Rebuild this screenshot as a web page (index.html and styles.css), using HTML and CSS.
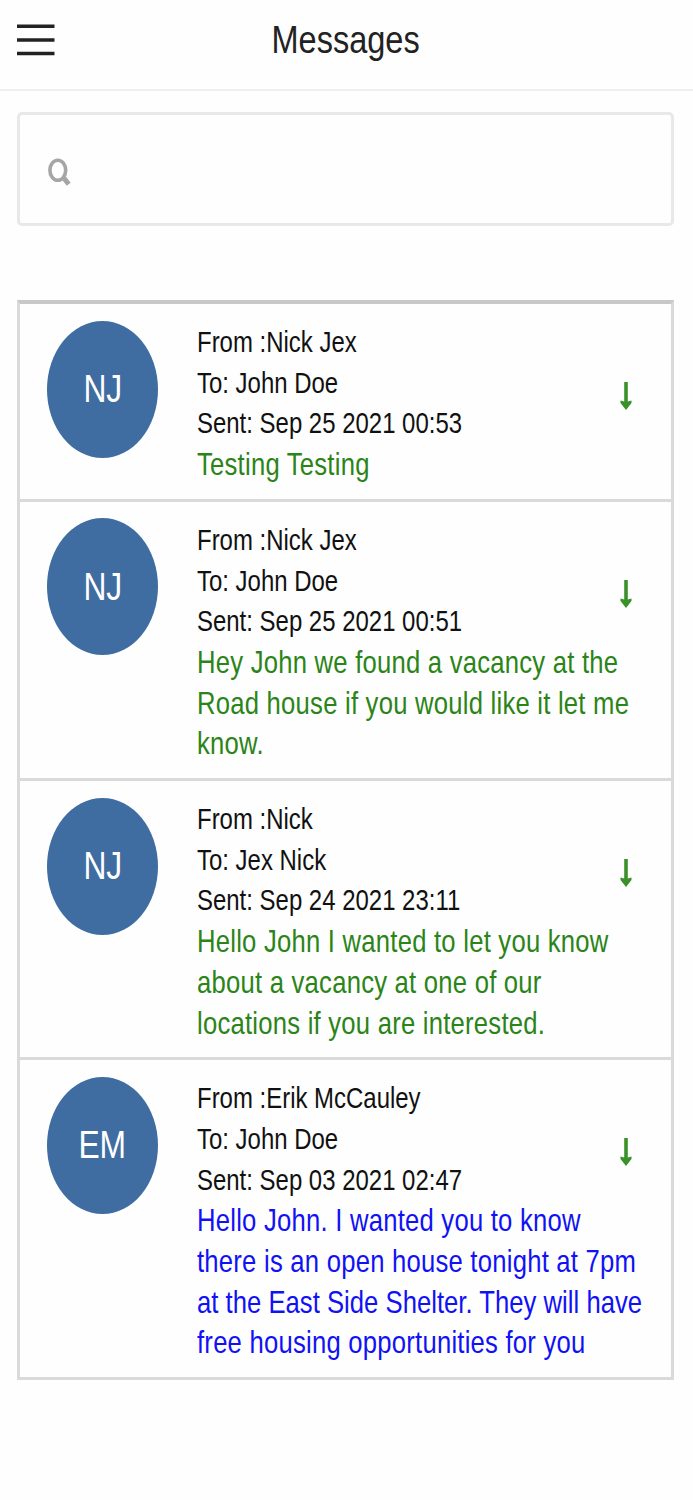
FILE: index.html
```html
<!DOCTYPE html>
<html lang="en">
<head>
<meta charset="utf-8">
<title>Messages</title>
<link rel="stylesheet" href="styles.css">
</head>
<body>
<header class="bar">
  <svg class="menu" width="38" height="34" viewBox="0 0 38 34"><path d="M0 3.2H37.5M0 17H37.5M0 30.5H37.5" stroke="#222" stroke-width="3.6"/></svg>
  <h1 class="title">Messages</h1>
</header>
<div class="search">
  <svg width="24" height="30" viewBox="0 0 24 30" fill="none" stroke="#a6a6a6"><ellipse cx="9.8" cy="12.3" rx="7.9" ry="10" stroke-width="3.6"/><path d="M15.2 19.2L20.7 26.3" stroke-width="5"/></svg>
</div>
<main class="list">
  <article class="row">
    <div class="avatar"><span>NJ</span></div>
    <div class="text"><p>From :Nick Jex</p><p>To: John Doe</p><p>Sent: Sep 25 2021 00:53</p><p class="body">Testing Testing</p></div>
    <svg class="arrow" width="12" height="30" viewBox="0 0 12 30"><path d="M4.2 1H7.8V20.4L11.5 19.6V22L6 29L.5 22V19.6L4.2 20.4Z"/></svg>
  </article>
  <article class="row">
    <div class="avatar"><span>NJ</span></div>
    <div class="text"><p>From :Nick Jex</p><p>To: John Doe</p><p>Sent: Sep 25 2021 00:51</p><p class="body">Hey John we found a vacancy at the<br>Road house if you would like it let me<br>know.</p></div>
    <svg class="arrow" width="12" height="30" viewBox="0 0 12 30"><path d="M4.2 1H7.8V20.4L11.5 19.6V22L6 29L.5 22V19.6L4.2 20.4Z"/></svg>
  </article>
  <article class="row">
    <div class="avatar"><span>NJ</span></div>
    <div class="text"><p>From :Nick</p><p>To: Jex Nick</p><p>Sent: Sep 24 2021 23:11</p><p class="body">Hello John I wanted to let you know<br>about a vacancy at one of our<br>locations if you are interested.</p></div>
    <svg class="arrow" width="12" height="30" viewBox="0 0 12 30"><path d="M4.2 1H7.8V20.4L11.5 19.6V22L6 29L.5 22V19.6L4.2 20.4Z"/></svg>
  </article>
  <article class="row">
    <div class="avatar"><span>EM</span></div>
    <div class="text"><p>From :Erik McCauley</p><p>To: John Doe</p><p>Sent: Sep 03 2021 02:47</p><p class="body unread">Hello John. I wanted you to know<br>there is an open house tonight at 7pm<br><span class="tight">at the East Side Shelter. They will have</span><br>free housing opportunities for you</p></div>
    <svg class="arrow" width="12" height="30" viewBox="0 0 12 30"><path d="M4.2 1H7.8V20.4L11.5 19.6V22L6 29L.5 22V19.6L4.2 20.4Z"/></svg>
  </article>
</main>
</body>
</html>
```
FILE: styles.css
```css
* { box-sizing: border-box; }
body {
  margin: 0;
  min-height: 1500px;
  background: #fefefe;
  font-family: "Liberation Sans", Arial, sans-serif;
  color: #111;
}
p, h1 { margin: 0; font-weight: 400; }
.bar {
  height: 91px;
  padding: 0 17px 10px;
  border-bottom: 2px solid #f0f0f0;
  display: grid;
  grid-template-columns: 38px 1fr 38px;
  align-items: center;
}
.menu { display: block; }
.title {
  justify-self: center;
  margin-right: 2px;
  font-size: 38px;
  line-height: 44px;
  color: #222;
  transform: scaleX(.855);
}
.search {
  margin: 21px 19px 0 17px;
  height: 114px;
  padding: 7px 0 0 28px;
  border: 3px solid #e8e8e8;
  border-radius: 5px;
  display: flex;
  align-items: center;
}
.list {
  margin: 74px 19px 0 17px;
  border: 3px solid #dadada;
  border-top: 4px solid #c8c8c8;
  border-bottom: 0;
}
.row {
  display: grid;
  grid-template-columns: 111px 1fr 12px;
  column-gap: 39px;
  padding: 16.5px 39px 14px 27px;
  border-bottom: 3px solid #dadada;
  align-items: start;
}
.avatar {
  height: 137px;
  border-radius: 50%;
  background: #3f6da2;
  color: #fff;
  display: flex;
  align-items: center;
  justify-content: center;
  font-size: 39px;
}
.avatar span { transform: scaleX(.815); }
.text {
  width: 530px;
  margin-right: -180px;
  padding-top: 1.5px;
  transform: scaleX(.812);
  transform-origin: 0 0;
  font-size: 29.5px;
  line-height: 40.7px;
  white-space: nowrap;
}
.body { font-size: 31.6px; letter-spacing: .28px; color: #2b8417; }
.unread { color: #1111f5; }
.tight { letter-spacing: .02px; }
.arrow { margin-top: 60.5px; fill: #3b9129; }
```
